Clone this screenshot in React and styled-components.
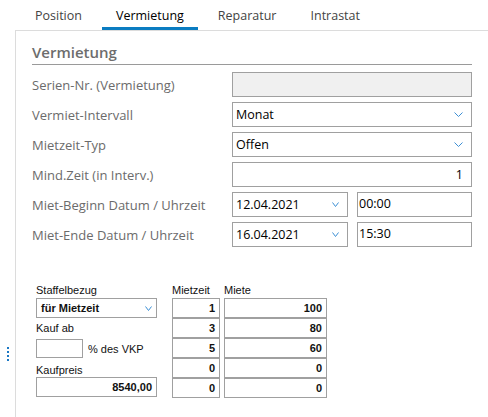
import styled, { createGlobalStyle } from "styled-components";

const GlobalStyle = createGlobalStyle`
  html, body {
    margin: 0;
    padding: 0;
    background: #fff;
  }
  body {
    font-family: "Open Sans", "Noto Sans", sans-serif;
  }
`;

const Page = styled.div`
  position: relative;
  width: 488px;
  height: 417px;
  overflow: hidden;
  display: flex;
  flex-direction: column;
`;

const TabBar = styled.div`
  display: flex;
  gap: 6px;
  padding-left: 21px;
  height: 30px;
`;

const Tab = styled.div`
  box-sizing: border-box;
  height: 30px;
  padding: 3px 14px 0;
  display: flex;
  align-items: center;
  font-size: 12.5px;
  color: ${(p) => (p.$active ? "#000" : "#444")};
  border-bottom: 3px solid ${(p) => (p.$active ? "#0a7cc1" : "transparent")};
`;

const Panel = styled.div`
  flex: 1;
  margin-left: 15px;
  border-left: 1px solid #dcdcdc;
  border-top: 1px solid #dcdcdc;
  padding: 11px 0 0 16px;
`;

const Section = styled.div`
  width: 440px;
`;

const Title = styled.div`
  font-size: 15px;
  font-weight: 600;
  line-height: 20px;
  color: #6d6d6d;
  padding-bottom: 2px;
  border-bottom: 1px solid #9a9a9a;
  margin-bottom: 7px;
`;

const Rows = styled.div`
  display: flex;
  flex-direction: column;
  gap: 5px;
`;

const FormRow = styled.div`
  display: grid;
  grid-template-columns: 200px 240px;
  align-items: center;
  height: 25px;
`;

const Label = styled.div`
  font-size: 13px;
  color: #6b6b6b;
`;

const Field = styled.div`
  box-sizing: border-box;
  height: 25px;
  border: 1px solid #a0a0a0;
  background: ${(p) => (p.$disabled ? "#f0f0f0" : "#fff")};
  display: flex;
  align-items: ${(p) => (p.$top ? "flex-start" : "center")};
  justify-content: ${(p) => (p.$right ? "flex-end" : "space-between")};
  padding: ${(p) => (p.$top ? "2px 4px 0 1px" : "0 8px 0 3px")};
  font-size: 12.5px;
  color: #000;
`;

const Pair = styled.div`
  display: grid;
  grid-template-columns: 116px 115px;
  gap: 9px;
`;

const Chevron = ({ w = 9 }) => (
  <svg width={w} height="5" viewBox={`0 0 ${w} 5`}>
    <path
      d={`M0.5 0.5 L${w / 2} 4.5 L${w - 0.5} 0.5`}
      fill="none"
      stroke="#3d8fd4"
      strokeWidth="1"
    />
  </svg>
);

const Staffel = styled.div`
  display: flex;
  gap: 15px;
  margin: 35px 0 0 4px;
  font-family: "Liberation Sans", Arial, sans-serif;
  font-size: 11px;
  color: #111;
`;

const Column = styled.div`
  width: ${(p) => p.$w}px;
  display: flex;
  flex-direction: column;
`;

const Table = styled.div`
  display: flex;
  gap: 4px;
`;

const Head = styled.div`
  height: 16px;
  line-height: 16px;
`;

const SmallLabel = styled.div`
  height: ${(p) => p.$h}px;
  line-height: ${(p) => p.$h}px;
  padding-top: ${(p) => p.$pt || 0}px;
  box-sizing: border-box;
`;

const Box = styled.div`
  box-sizing: border-box;
  height: ${(p) => p.$h || 20}px;
  width: ${(p) => (p.$w ? `${p.$w}px` : "auto")};
  border: 1px solid #a0a0a0;
  background: #fff;
  display: flex;
  align-items: center;
  justify-content: ${(p) => (p.$left ? "space-between" : "flex-end")};
  padding: 0 4px;
  font-weight: bold;
`;

const Inline = styled.div`
  display: flex;
  align-items: center;
  gap: 5px;
`;

const Grip = styled.div`
  position: absolute;
  left: 7px;
  top: 347px;
  display: flex;
  flex-direction: column;
  gap: 2px;
`;

const Dot = styled.span`
  width: 2px;
  height: 2px;
  background: #1b78c4;
`;

const rows = [
  ["1", "100"],
  ["3", "80"],
  ["5", "60"],
  ["0", "0"],
  ["0", "0"],
];

export default function App() {
  return (
    <Page>
      <GlobalStyle />
      <TabBar>
        <Tab>Position</Tab>
        <Tab $active>Vermietung</Tab>
        <Tab>Reparatur</Tab>
        <Tab>Intrastat</Tab>
      </TabBar>
      <Panel>
        <Section>
          <Title>Vermietung</Title>
          <Rows>
            <FormRow>
              <Label>Serien-Nr. (Vermietung)</Label>
              <Field $disabled />
            </FormRow>
            <FormRow>
              <Label>Vermiet-Intervall</Label>
              <Field>
                Monat
                <Chevron />
              </Field>
            </FormRow>
            <FormRow>
              <Label>Mietzeit-Typ</Label>
              <Field>
                Offen
                <Chevron />
              </Field>
            </FormRow>
            <FormRow>
              <Label>Mind.Zeit (in Interv.)</Label>
              <Field $right>1</Field>
            </FormRow>
            <FormRow>
              <Label>Miet-Beginn Datum / Uhrzeit</Label>
              <Pair>
                <Field>
                  12.04.2021
                  <Chevron w={7} />
                </Field>
                <Field $top>00:00</Field>
              </Pair>
            </FormRow>
            <FormRow>
              <Label>Miet-Ende Datum / Uhrzeit</Label>
              <Pair>
                <Field>
                  16.04.2021
                  <Chevron w={7} />
                </Field>
                <Field $top>15:30</Field>
              </Pair>
            </FormRow>
          </Rows>
        </Section>
        <Staffel>
          <Column $w={121}>
            <Head>Staffelbezug</Head>
            <Box $left>
              für Mietzeit
              <Chevron w={7} />
            </Box>
            <SmallLabel $h={21}>Kauf ab</SmallLabel>
            <Inline>
              <Box $h={19} $w={47} />
              <span>% des VKP</span>
            </Inline>
            <SmallLabel $h={19} $pt={3}>Kaufpreis</SmallLabel>
            <Box>8540,00</Box>
          </Column>
          <Table>
            <Column $w={48}>
              <Head>Mietzeit</Head>
              {rows.map((r, i) => (
                <Box key={i}>{r[0]}</Box>
              ))}
            </Column>
            <Column $w={103}>
              <Head>Miete</Head>
              {rows.map((r, i) => (
                <Box key={i}>{r[1]}</Box>
              ))}
            </Column>
          </Table>
        </Staffel>
      </Panel>
      <Grip>
        <Dot />
        <Dot />
        <Dot />
        <Dot />
      </Grip>
    </Page>
  );
}
